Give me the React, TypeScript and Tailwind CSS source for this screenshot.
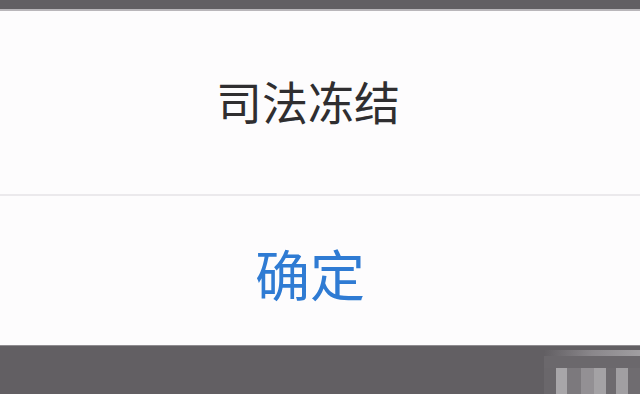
export default function App() {
  const cjk = { fontFamily: '"Noto Sans CJK SC", "Noto Sans", sans-serif' };
  return (
    <div className="w-[640px] h-[394px] flex flex-col bg-[#625f63] overflow-hidden" style={cjk}>
      {/* 上部の暗い帯 */}
      <div className="h-[9px] bg-[#625f63]" />
      <div className="h-[2px] bg-[#b9b6ba]" />

      {/* ダイアログ本体 */}
      <div className="bg-[#fdfcfd] flex flex-col">
        <div className="h-[183px] flex items-center justify-center pr-[24px]">
          <p className="text-[46px] leading-none text-[#2f2e30] pb-[6px]">司法冻结</p>
        </div>
        <div className="h-[2px] bg-[#ebe9ec]" />
        <div className="h-[149px] flex items-center justify-center pr-[20px]">
          <p className="text-[55px] leading-none text-[#2f7bd3] pt-[4px]">确定</p>
        </div>
      </div>

      {/* 下部の暗い帯 + モザイク */}
      <div className="h-[1px] bg-[#8f8c90]" />
      <div className="flex-1 flex justify-end items-end">
        <div className="flex flex-col w-[96px] h-[44px]">
          <div className="h-[6px] bg-gradient-to-r from-[#625f63] via-[#8a878b] to-[#a09ea1]" />
          <div className="h-[12px] bg-[#6b686c]" />
          <div className="flex-1 flex">
            <div className="w-[12px] bg-[#6a676b]" />
            <div className="w-[11px] bg-[#a8a6a9]" />
            <div className="w-[14px] bg-[#7c797d]" />
            <div className="w-[13px] bg-[#939094]" />
            <div className="w-[12px] bg-[#a4a2a5]" />
            <div className="w-[10px] bg-[#6e6b6f]" />
            <div className="w-[12px] bg-[#a19fa2]" />
            <div className="flex-1 bg-[#6f6c70]" />
          </div>
        </div>
      </div>
    </div>
  );
}
